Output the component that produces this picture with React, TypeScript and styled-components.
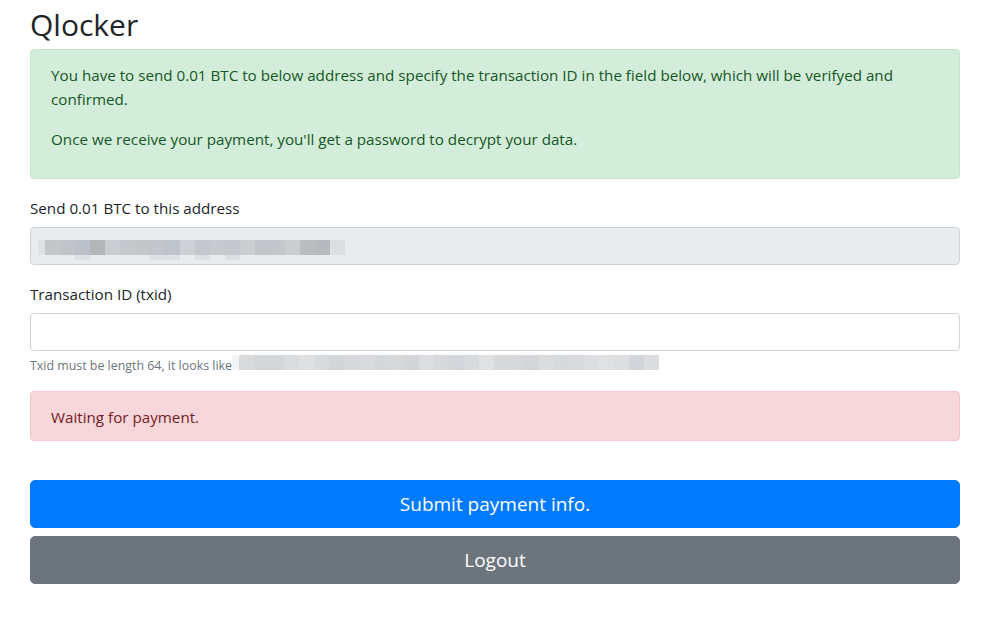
import React from "react";
import styled, { createGlobalStyle } from "styled-components";

const GlobalStyle = createGlobalStyle`
  * {
    box-sizing: border-box;
  }
  body {
    margin: 0;
    background: #fff;
    color: #212529;
    font-family: "Open Sans", "Noto Sans", sans-serif;
    font-size: 15.2px;
    line-height: 24px;
  }
`;

const addressBlocks = [
  "#c4c6ca", "#c0c3c8", "#bcc0c9", "#b5b6b8", "#c9ccd0", "#c5c8cc", "#c4c7ca", "#c2c5cb", "#bfc3cc", "#cdd0d4",
  "#c4c7cb", "#c6c9cd", "#c5c8cd", "#cbcdd1", "#c3c5ca", "#c3c6cb", "#cbcdd1", "#bbbcbf", "#b7b9bf", "#dcdfe2",
];
const addressDrips = [2, 7, 8, 10, 12];

const txidBlocks = [
  "#d9dadc", "#d4d7da", "#d4d7da", "#d9dcdf", "#dfe0e2", "#d8dbde", "#d3d6d9", "#d7d8db", "#d9dadd", "#d5d8db",
  "#d7d8da", "#d3d5d8", "#dcdde0", "#d8d9dc", "#d3d6da", "#d8dbde", "#e0e1e3", "#d8d9db", "#d7d8db", "#d4d6da",
  "#dbdcde", "#d7dadc", "#d8dadd", "#dcdde0", "#e0e1e3", "#dcdee0", "#d2d5d9", "#dbdcdf",
];

const Page = styled.div`
  padding: 3px 28px 40px 30px;
`;

const Title = styled.h2`
  margin: 0 0 8px;
  padding-top: 6px;
  font-size: 30px;
  font-weight: 400;
  line-height: 32px;
`;

const Alert = styled.div<{ $variant: "success" | "danger" }>`
  padding: 13px 20px 11px;
  margin-bottom: 16px;
  border: 1px solid ${(p) => (p.$variant === "success" ? "#c3e6cb" : "#f5c6cb")};
  border-radius: 4px;
  background: ${(p) => (p.$variant === "success" ? "#d4edda" : "#f8d7da")};
  color: ${(p) => (p.$variant === "success" ? "#155724" : "#721c24")};

  p {
    margin: 0 0 16px;
  }
`;

const FormGroup = styled.div`
  margin-bottom: 16px;
`;

const Label = styled.label`
  display: block;
  padding-top: 1px;
  margin-bottom: 7px;
`;

const Control = styled.input`
  display: block;
  width: 100%;
  height: 38px;
  padding: 6px 12px;
  font: inherit;
  color: #495057;
  background: #fff;
  border: 1px solid #ced4da;
  border-radius: 4px;
  outline: none;
`;

const ReadonlyControl = styled.div`
  display: flex;
  align-items: flex-start;
  height: 38px;
  padding: 12px 7px 0;
  background: #e9ecef;
  border: 1px solid #ced4da;
  border-radius: 4px;
`;

const Help = styled.small`
  display: flex;
  align-items: center;
  margin-top: 4px;
  font-size: 12.4px;
  line-height: 19px;
  color: #6c757d;
`;

const Spacer = styled.div`
  height: 23px;
`;

const Button = styled.button<{ $variant: "primary" | "secondary" }>`
  display: block;
  width: 100%;
  height: 48px;
  padding: 8px 16px;
  margin-bottom: 8px;
  font-family: inherit;
  font-size: 19px;
  line-height: 30px;
  color: #fff;
  background: ${(p) => (p.$variant === "primary" ? "#007bff" : "#6c757d")};
  border: 1px solid ${(p) => (p.$variant === "primary" ? "#007bff" : "#6c757d")};
  border-radius: 5px;
  cursor: pointer;
`;

const Pixelated = ({ colors, lead, drips = [] }: { colors: string[]; lead: string; drips?: number[] }) => (
  <svg width={7 + colors.length * 15} height={20} style={{ display: "block", flexShrink: 0 }}>
    <rect x={0} y={0} width={7} height={15} fill={lead} />
    {colors.map((c, i) => (
      <rect key={i} x={7 + i * 15} y={0} width={15} height={15} fill={c} />
    ))}
    {drips.map((i) => (
      <rect key={`d${i}`} x={7 + i * 15} y={15} width={15} height={5} fill="#dcdfe3" />
    ))}
  </svg>
);

export default function App() {
  return (
    <>
      <GlobalStyle />
      <Page>
        <Title>Qlocker</Title>
        <Alert $variant="success">
          <p>
            You have to send 0.01 BTC to below address and specify the transaction ID in the field below, which will be
            verifyed and confirmed.
          </p>
          <p>Once we receive your payment, you'll get a password to decrypt your data.</p>
        </Alert>

        <FormGroup>
          <Label>Send 0.01 BTC to this address</Label>
          <ReadonlyControl>
            <Pixelated colors={addressBlocks} lead="#dfe2e5" drips={addressDrips} />
          </ReadonlyControl>
        </FormGroup>

        <FormGroup>
          <Label htmlFor="txid">Transaction ID (txid)</Label>
          <Control id="txid" type="text" />
          <Help>
            Txid must be length 64, it looks like
            <Pixelated colors={txidBlocks} lead="#f3f4f5" />
          </Help>
        </FormGroup>

        <Alert $variant="danger">Waiting for payment.</Alert>

        <Spacer />
        <Button $variant="primary">Submit payment info.</Button>
        <Button $variant="secondary">Logout</Button>
      </Page>
    </>
  );
}
